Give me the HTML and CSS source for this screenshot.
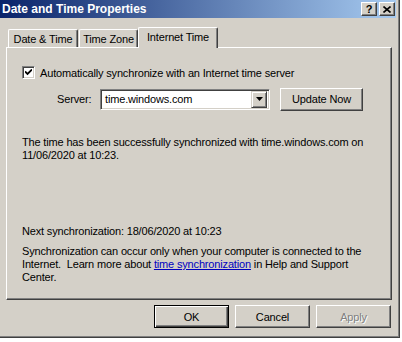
FILE: index.html
```html
<html>
  <head>
    <meta name="viewport" content="width=device-width, initial-scale=1.0">
    <title>Date and Time Properties</title>
    <link rel="stylesheet" href="styles.css">
  </head>
  <body>
    <div class="window">
      <div class="titlebar">
        <span class="title">Date and Time Properties</span>
        <div class="caption-buttons">
          <span class="cap-btn help">?</span>
          <span class="cap-btn">
            <svg width="8" height="7" viewBox="0 0 8 7">
              <path d="M0.5 0.5l7 6M7.5 0.5l-7 6" stroke="#000" stroke-width="1.6" fill="none"/>
            </svg>
          </span>
        </div>
      </div>

      <div class="tabs">
        <div class="tab tab-date">Date &amp; Time</div>
        <div class="tab tab-zone">Time Zone</div>
        <div class="tab tab-inet active">Internet Time</div>
      </div>

      <div class="panel">
        <div class="check-row">
          <span class="checkbox">
            <svg width="7" height="7" viewBox="0 0 7 7">
              <path d="M0 2.5l2.5 2.5 4.5-4.5" stroke="#000" stroke-width="1.8" fill="none"/>
            </svg>
          </span>
          <span>Automatically synchronize with an Internet time server</span>
        </div>

        <div class="server-row">
          <span class="server-label">Server:</span>
          <div class="combo">
            <span class="combo-text">time.windows.com</span>
            <span class="combo-btn">
              <svg width="7" height="4" viewBox="0 0 7 4"><path d="M0 0h7l-3.5 4z" fill="#000"/></svg>
            </span>
          </div>
          <button class="btn update">Update Now</button>
        </div>

        <p class="status">The time has been successfully synchronized with time.windows.com on<br>11/06/2020 at 10:23.</p>

        <p class="next">Next synchronization: 18/06/2020 at 10:23</p>
        <p class="note">Synchronization can occur only when your computer is connected to the<br>Internet.&nbsp; Learn more about <a href="#">time synchronization</a> in Help and Support<br>Center.</p>
      </div>

      <div class="dialog-buttons">
        <button class="btn default">OK</button>
        <button class="btn">Cancel</button>
        <button class="btn disabled">Apply</button>
      </div>
    </div>
  </body>
</html>
```

FILE: styles.css
```css
body {
  margin: 0;
  background: #ffffff;
  font-family: "Liberation Sans", Arial, sans-serif;
  font-size: 11px;
  letter-spacing: -0.16px;
  color: #000;
}
.window {
  width: 400px;
  height: 338px;
  box-sizing: border-box;
  background: #d4d0c8;
  border-right: 1px solid #404040;
  border-bottom: 1px solid #404040;
  box-shadow: inset -1px -1px #808080;
}
.titlebar {
  height: 18px;
  margin-right: 3px;
  display: flex;
  align-items: center;
  justify-content: space-between;
  background: linear-gradient(90deg, #0a246a, #a6caf0);
}
.title {
  color: #fff;
  font-weight: bold;
  font-size: 12px;
  letter-spacing: 0;
  padding-left: 2px;
}
.caption-buttons {
  display: flex;
  gap: 2px;
  margin-right: 1px;
}
.cap-btn {
  width: 16px;
  height: 14px;
  box-sizing: border-box;
  display: flex;
  align-items: center;
  justify-content: center;
  background: #d4d0c8;
  border-top: 1px solid #fff;
  border-left: 1px solid #fff;
  border-right: 1px solid #404040;
  border-bottom: 1px solid #404040;
  box-shadow: inset -1px -1px #808080;
}
.cap-btn.help {
  font-weight: bold;
  font-size: 11px;
  line-height: 12px;
}
.tabs {
  display: flex;
  margin: 9px 0 0 8px;
  height: 20px;
  align-items: flex-end;
}
.tab {
  height: 18px;
  box-sizing: border-box;
  padding-top: 3px;
  text-align: center;
  border-top: 1px solid #fff;
  border-left: 1px solid #fff;
  border-right: 1px solid #404040;
  box-shadow: inset -1px 0 #808080;
  border-radius: 2px 2px 0 0;
  margin-right: 1px;
}
.tab-date {
  width: 70px;
}
.tab-zone {
  width: 59px;
}
.tab.active {
  width: 80px;
  height: 21px;
  margin-bottom: -1px;
  margin-left: -1px;
  background: #d4d0c8;
  position: relative;
  z-index: 1;
}
.panel {
  margin-left: 6px;
  width: 386px;
  height: 253px;
  box-sizing: border-box;
  border-top: 1px solid #fff;
  border-left: 1px solid #fff;
  border-right: 1px solid #404040;
  border-bottom: 1px solid #404040;
  box-shadow: inset -1px -1px #808080;
  padding: 18px 0 0 15px;
}
.check-row {
  display: flex;
  align-items: center;
  gap: 5px;
  height: 13px;
}
.checkbox {
  width: 13px;
  height: 13px;
  box-sizing: border-box;
  display: flex;
  align-items: center;
  justify-content: center;
  background: #fff;
  border-top: 1px solid #808080;
  border-left: 1px solid #808080;
  border-right: 1px solid #fff;
  border-bottom: 1px solid #fff;
  box-shadow: inset 1px 1px #404040, inset -1px -1px #d4d0c8;
}
.server-row {
  display: flex;
  align-items: center;
  margin-top: 9px;
  height: 22px;
}
.server-label {
  width: 43px;
  margin-left: 35px;
}
.combo {
  width: 170px;
  height: 21px;
  box-sizing: border-box;
  display: flex;
  align-items: center;
  justify-content: space-between;
  background: #fff;
  border-top: 1px solid #808080;
  border-left: 1px solid #808080;
  border-right: 1px solid #fff;
  border-bottom: 1px solid #fff;
  box-shadow: inset 1px 1px #404040, inset -1px -1px #d4d0c8;
  padding: 0 2px 0 4px;
}
.combo-btn {
  width: 16px;
  height: 17px;
  box-sizing: border-box;
  display: flex;
  align-items: center;
  justify-content: center;
  background: #d4d0c8;
  border-top: 1px solid #d4d0c8;
  border-left: 1px solid #d4d0c8;
  border-right: 1px solid #404040;
  border-bottom: 1px solid #404040;
  box-shadow: inset 1px 1px #fff, inset -1px -1px #808080;
}
.btn {
  font-family: inherit;
  font-size: 11px;
  letter-spacing: inherit;
  color: #000;
  width: 75px;
  height: 23px;
  padding: 0;
  background: #d4d0c8;
  border-top: 1px solid #fff;
  border-left: 1px solid #fff;
  border-right: 1px solid #404040;
  border-bottom: 1px solid #404040;
  box-shadow: inset -1px -1px #808080;
}
.btn.update {
  width: 83px;
  margin-left: 10px;
}
.btn.default {
  border: 1px solid #000;
  box-shadow: inset 1px 1px #fff, inset -1px -1px #404040, inset -2px -2px #808080;
}
.btn.disabled {
  color: #808080;
  text-shadow: 1px 1px #fff;
}
p {
  margin: 0;
  line-height: 13px;
}
.status {
  margin-top: 26px;
}
.next {
  margin-top: 63px;
}
.note {
  margin-top: 7px;
}
a {
  color: #0000c0;
}
.dialog-buttons {
  display: flex;
  justify-content: flex-end;
  gap: 6px;
  margin: 5px 8px 0 0;
}
```
